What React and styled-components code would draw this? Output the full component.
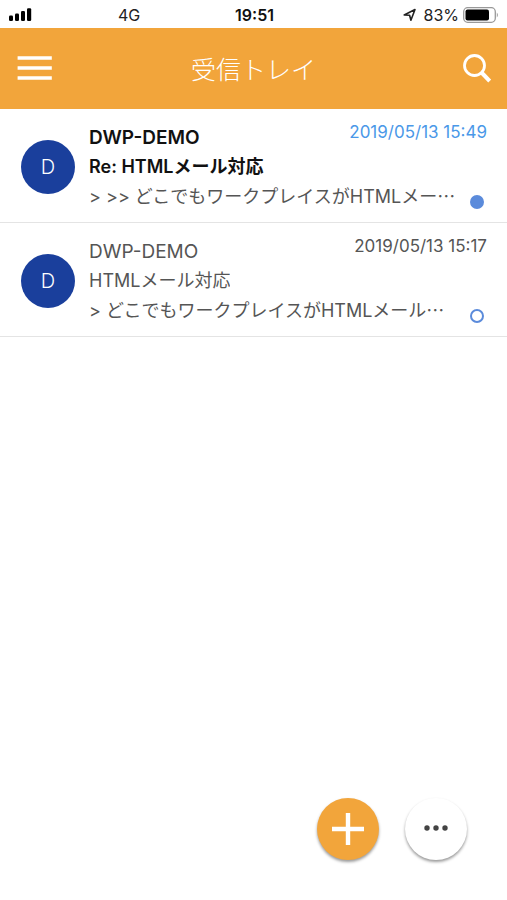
import styled, { createGlobalStyle } from "styled-components";

const GlobalStyle = createGlobalStyle`
    * {
        box-sizing: border-box;
    }

    body {
        margin: 0;
        background: #fff;
        color: #555;
        font-family: Inter, "Noto Sans CJK JP", sans-serif;
        font-size: 18px;
    }

    svg {
        display: block;
    }
`;

const Screen = styled.div`
    min-height: 100vh;
`;

const StatusBar = styled.div`
    display: grid;
    grid-template-columns: 1fr auto 1fr;
    align-items: center;
    height: 28px;
    padding: 2px 8px 0;
    color: #222;
    font-size: 16px;
    line-height: 26px;
`;

const Carrier = styled.div`
    display: flex;
    align-items: center;
    gap: 86px;
`;

const Clock = styled.time`
    padding-left: 2px;
    color: #111;
    font-weight: 600;
`;

const Battery = styled.div`
    display: flex;
    align-items: center;
    justify-content: flex-end;

    svg:first-child {
        margin-right: 8px;
    }

    svg:last-child {
        margin-left: 4px;
    }
`;

const AppBar = styled.header`
    display: flex;
    align-items: center;
    justify-content: space-between;
    height: 81px;
    padding: 0 16px 2px;
    background: #f2a53b;
    color: #fff;

    h1 {
        margin: 0;
        font-family: "Noto Sans CJK JP", sans-serif;
        font-size: 25px;
        font-weight: 300;
        line-height: 36px;
    }
`;

const Button = styled.button`
    display: flex;
    align-items: center;
    justify-content: center;
    padding: 0;
    border: 0;
    background: none;
    cursor: pointer;
`;

const BarButton = styled(Button)`
    justify-content: flex-end;
    width: 36px;
    height: 36px;
    color: #fff;
`;

const MailList = styled.ul`
    margin: 0;
    padding: 0;
    list-style: none;
`;

const MailRow = styled.li`
    display: flex;
    align-items: center;
    padding: 14px 20px 12px 21px;
    border-bottom: 1px solid #e4e4e4;
`;

const Avatar = styled.div`
    display: flex;
    flex-shrink: 0;
    align-items: center;
    justify-content: center;
    width: 54px;
    height: 54px;
    margin-right: 14px;
    border-radius: 50%;
    background: #1a3f9c;
    color: #fff;
    font-size: 20px;
    font-weight: 300;
`;

const MailBody = styled.div`
    flex: 1;
    min-width: 0;
    line-height: 29px;
    white-space: nowrap;
`;

const Line = styled.div`
    display: flex;
    align-items: center;
    justify-content: space-between;
    height: 29px;
`;

const Subject = styled.span`
    overflow: hidden;
    color: ${({ $unread }) => ($unread ? "#111" : "#555")};
    font-weight: ${({ $unread }) => ($unread ? 600 : 400)};
    text-overflow: ellipsis;
`;

const Sender = styled(Subject)`
    font-size: 19px;
`;

const MailDate = styled.time`
    align-self: flex-start;
    color: ${({ $unread }) => ($unread ? "#4a98e8" : "#555")};
    font-size: 17px;
    line-height: 18px;
`;

const Preview = styled.span`
    overflow: hidden;
`;

const Dots = styled.span`
    font-family: "Noto Sans CJK JP", sans-serif;
`;

const ReadMark = styled.span`
    align-self: flex-end;
    flex-shrink: 0;
    width: 14px;
    height: 14px;
    margin: 0 3px 1px 0;
    border: 2px solid #5b8bdb;
    border-radius: 50%;
    background: ${({ $unread }) => ($unread ? "#5b8bdb" : "#fff")};
`;

const Actions = styled.div`
    position: fixed;
    right: 40px;
    bottom: 40px;
    display: flex;
    gap: 26px;
`;

const RoundButton = styled(Button)`
    width: 62px;
    height: 62px;
    border-radius: 50%;
    background: ${({ $primary }) => ($primary ? "#f2a53b" : "#fff")};
    color: ${({ $primary }) => ($primary ? "#fff" : "#444")};
    box-shadow: 0 2px 3px rgba(0, 0, 0, 0.4);
`;

const mails = [
    {
        id: 1,
        sender: "DWP-DEMO",
        subject: "Re: HTMLメール対応",
        preview: "> >> どこでもワークプレイスがHTMLメー",
        date: "2019/05/13 15:49",
        unread: true,
    },
    {
        id: 2,
        sender: "DWP-DEMO",
        subject: "HTMLメール対応",
        preview: "> どこでもワークプレイスがHTMLメール",
        date: "2019/05/13 15:17",
        unread: false,
    },
];

const SignalIcon = () => (
    <svg width="24" height="14" viewBox="0 0 24 14" fill="#000">
        <rect x="1" y="7.5" width="4" height="5.5" rx="1.2" />
        <rect x="7" y="5.5" width="4" height="7.5" rx="1.2" />
        <rect x="13" y="3" width="4" height="10" rx="1.2" />
        <rect x="19" y="0.2" width="4.2" height="12.8" rx="1.2" />
    </svg>
);

const LocationIcon = () => (
    <svg width="14" height="14" viewBox="0 0 14 14" fill="none" stroke="#222" strokeWidth="1.6" strokeLinejoin="round">
        <path d="M2.2 7 13 1.5 8.9 12.2 7.6 7.2Z" />
    </svg>
);

const BatteryIcon = () => (
    <svg width="36" height="16" viewBox="0 0 36 16">
        <rect x="0.7" y="0.7" width="31.6" height="14.6" rx="4" fill="none" stroke="#999" strokeWidth="1.3" />
        <rect x="2.5" y="2.5" width="23.5" height="11" rx="2" fill="#000" />
        <path d="M33.8 5.5Q36 8 33.8 10.5Z" fill="#999" />
    </svg>
);

const MenuIcon = () => (
    <svg width="36" height="26" viewBox="0 0 36 26" stroke="#fff" strokeWidth="3.4">
        <path d="M1.6 3H35.8M1.6 13H35.8M1.6 23H35.8" />
    </svg>
);

const SearchIcon = () => (
    <svg width="30" height="30" viewBox="0 0 30 30" fill="none" stroke="#fff">
        <circle cx="13.5" cy="12.5" r="10" strokeWidth="2.8" />
        <path d="M20.5 19.5 28.7 28" strokeWidth="4" />
    </svg>
);

const PlusIcon = () => (
    <svg width="32" height="32" viewBox="0 0 32 32" stroke="#fff" strokeWidth="4.4">
        <path d="M16 0V32M0 16H32" />
    </svg>
);

const MoreIcon = () => (
    <svg width="24" height="8" viewBox="0 0 24 8" fill="currentColor">
        <circle cx="3" cy="3" r="2.7" />
        <circle cx="12" cy="3" r="2.7" />
        <circle cx="21" cy="3" r="2.7" />
    </svg>
);

const MailItem = ({ mail }) => (
    <MailRow>
        <Avatar>{mail.sender[0]}</Avatar>
        <MailBody>
            <Line>
                <Sender $unread={mail.unread}>{mail.sender}</Sender>
                <MailDate $unread={mail.unread}>{mail.date}</MailDate>
            </Line>
            <Line>
                <Subject $unread={mail.unread}>{mail.subject}</Subject>
            </Line>
            <Line>
                <Preview>
                    {mail.preview}
                    <Dots>…</Dots>
                </Preview>
                <ReadMark $unread={mail.unread} />
            </Line>
        </MailBody>
    </MailRow>
);

const App = () => {
    return (
        <Screen lang="ja">
            <GlobalStyle />
            <StatusBar>
                <Carrier>
                    <SignalIcon />
                    <span>4G</span>
                </Carrier>
                <Clock>19:51</Clock>
                <Battery>
                    <LocationIcon />
                    <span>83%</span>
                    <BatteryIcon />
                </Battery>
            </StatusBar>
            <AppBar>
                <BarButton type="button" aria-label="メニュー">
                    <MenuIcon />
                </BarButton>
                <h1>受信トレイ</h1>
                <BarButton type="button" aria-label="検索">
                    <SearchIcon />
                </BarButton>
            </AppBar>
            <MailList>
                {mails.map((mail) => (
                    <MailItem key={mail.id} mail={mail} />
                ))}
            </MailList>
            <Actions>
                <RoundButton type="button" $primary aria-label="新規作成">
                    <PlusIcon />
                </RoundButton>
                <RoundButton type="button" aria-label="その他">
                    <MoreIcon />
                </RoundButton>
            </Actions>
        </Screen>
    );
};

export default App;
